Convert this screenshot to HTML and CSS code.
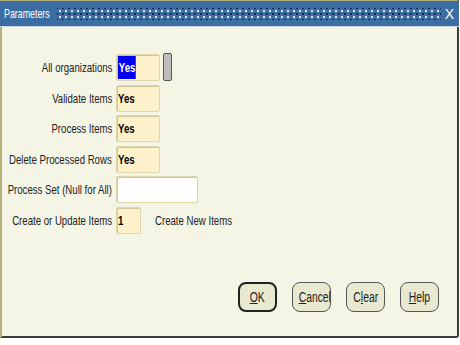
FILE: index.html
```html
<!DOCTYPE html>
<html lang="en">
<head>
    <meta charset="UTF-8">
    <title>Parameters</title>
    <link rel="stylesheet" href="styles.css">
</head>
<body>

<div class="window">
    <div class="titlebar">
        <span class="title"><span class="narrow">Parameters</span></span>
        <span class="grip"></span>
        <span class="close">X</span>
    </div>

    <div class="content">
        <div class="form">
            <label><span class="narrow">All organizations</span></label>
            <div class="row">
                <div class="field"><span class="narrow selected">Yes</span></div>
                <div class="lov"></div>
            </div>

            <label><span class="narrow">Validate Items</span></label>
            <div class="row"><div class="field"><span class="narrow">Yes</span></div></div>

            <label><span class="narrow">Process Items</span></label>
            <div class="row"><div class="field"><span class="narrow">Yes</span></div></div>

            <label><span class="narrow">Delete Processed Rows</span></label>
            <div class="row"><div class="field"><span class="narrow">Yes</span></div></div>

            <label><span class="narrow">Process Set (Null for All)</span></label>
            <div class="row"><div class="field field-wide"></div></div>

            <label><span class="narrow">Create or Update Items</span></label>
            <div class="row">
                <div class="field field-small"><span class="narrow">1</span></div>
                <span class="hint narrow">Create New Items</span>
            </div>
        </div>

        <div class="buttons">
            <button class="btn btn-default"><span class="narrow"><u>O</u>K</span></button>
            <button class="btn"><span class="narrow"><u>C</u>ancel</span></button>
            <button class="btn"><span class="narrow">C<u>l</u>ear</span></button>
            <button class="btn"><span class="narrow"><u>H</u>elp</span></button>
        </div>
    </div>
</div>

</body>
</html>
```

FILE: styles.css
```css
body {
    margin: 0;
    background-color: #fff;
    font-family: "Liberation Sans", Arial, sans-serif;
    font-size: 13px;
    color: #222;
}

/* Arial Narrow look-alike */
.narrow {
    display: inline-block;
    transform: scaleX(0.74);
    transform-origin: left center;
    white-space: nowrap;
}

.window {
    width: 459px;
    height: 338px;
    border-top: 1px solid #b4b07a;
    border-left: 2px solid #b4b07a;
    border-right: 2px solid #3c3c3c;
    border-bottom: 2px solid #3c3c3c;
    border-bottom-right-radius: 3px;
    background-color: #f5f5e6;
    box-sizing: border-box;
    display: flex;
    flex-direction: column;
}

.titlebar {
    height: 25px;
    margin-left: -2px;
    margin-right: -2px;
    background-color: #3b6ca2;
    display: flex;
    align-items: center;
    padding: 0 5px 0 4px;
    border-bottom: 1px solid #c9d6e4;
}

.title {
    color: #fff;
    width: 53px;
    flex: none;
}

.title .narrow {
    transform: scaleX(0.68);
}

.grip {
    flex: 1;
    height: 12px;
    margin-right: 4px;
    background-image:
        radial-gradient(circle, #dde6ee 0.9px, transparent 1.2px),
        radial-gradient(circle, #142b45 0.9px, transparent 1.2px);
    background-size: 6px 6px, 6px 6px;
    background-position: 0 0, 3px 3px;
}

.close {
    color: #fff;
    font-size: 14px;
}

.content {
    flex: 1;
    display: flex;
    flex-direction: column;
    padding-top: 26px;
}

.form {
    display: grid;
    grid-template-columns: 110px auto;
    column-gap: 4px;
    row-gap: 3.6px;
    align-items: center;
}

.form label {
    display: flex;
    justify-content: flex-end;
}

.form label .narrow {
    transform-origin: right center;
}

.row {
    display: flex;
    align-items: center;
    gap: 3px;
}

.field {
    width: 44px;
    height: 27px;
    box-sizing: border-box;
    border: 1px solid #ddd6a8;
    border-radius: 2px;
    box-shadow: inset 1px 1px 0 #cfc9a0;
    background-color: #fdf1cc;
    font-weight: bold;
    color: #000;
    display: flex;
    align-items: center;
    padding-left: 1px;
}

.field-wide {
    width: 82px;
    background-color: #fff;
}

.field-small {
    width: 25px;
}

.selected {
    background-color: #0000f0;
    color: #fff;
    padding: 4px 1px;
}

.lov {
    width: 9px;
    height: 28px;
    background-color: #bdbdbd;
    border: 1px solid #555;
    border-radius: 2px;
    box-sizing: border-box;
}

.hint {
    margin-left: 11px;
}

.buttons {
    display: flex;
    justify-content: flex-end;
    gap: 15px;
    margin-top: 48px;
    padding-right: 18px;
}

.btn {
    width: 39px;
    height: 30px;
    font-family: inherit;
    font-size: 14px;
    color: #222;
    background-color: #e9e8d0;
    border: 1px solid #555;
    border-radius: 8px;
    padding: 0;
}

.btn .narrow {
    transform-origin: center center;
}

.btn-default {
    border: 2px solid #222;
}
```
